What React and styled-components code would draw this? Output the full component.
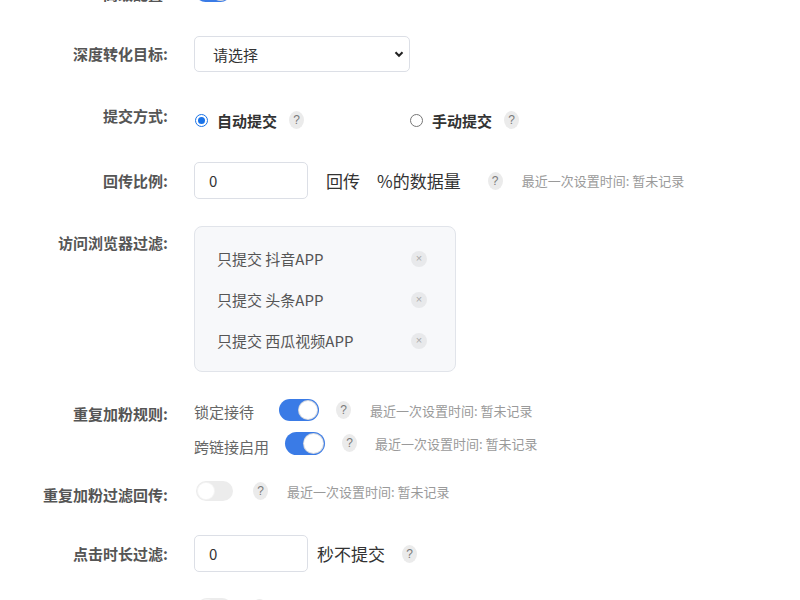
import React from 'react'
import styled, { createGlobalStyle } from 'styled-components'

const GlobalStyle = createGlobalStyle`
    html, body {
        margin: 0;
        padding: 0;
        background: #ffffff;
        overflow: hidden;
    }
    body {
        font-family: 'Noto Sans CJK SC', 'Noto Sans', sans-serif;
        color: #333;
    }
`

const Form = styled.div`
    display: flex;
    flex-direction: column;
    height: 600px;
    overflow: hidden;
`

const Row = styled.div`
    display: flex;
    align-items: ${(p) => (p.$top ? 'flex-start' : 'center')};
    margin-top: ${(p) => p.$mt}px;
    min-height: ${(p) => p.$h || 0}px;
    flex-shrink: 0;
`

const Label = styled.div`
    width: 168px;
    margin-right: 26px;
    flex-shrink: 0;
    text-align: right;
    font-size: 15px;
    font-weight: 700;
    color: #555;
    line-height: 24px;
    padding-top: ${(p) => p.$pt || 0}px;
    position: relative;
    top: ${(p) => p.$dy || 0}px;
`

const Select = styled.div`
    width: 216px;
    height: 36px;
    box-sizing: border-box;
    border: 1px solid #dcdfe6;
    border-radius: 5px;
    display: flex;
    align-items: center;
    justify-content: space-between;
    padding: 0 4px 0 18px;
    font-size: 15px;
    color: #333;
`

const Input = styled.div`
    width: 114px;
    height: 37px;
    box-sizing: border-box;
    border: 1px solid #dcdfe6;
    border-radius: 5px;
    display: flex;
    align-items: center;
    padding-left: 14px;
    font-size: 15px;
    color: #333;
`

const Suffix = styled.span`
    font-size: 17px;
    color: #333;
    margin-left: ${(p) => p.$ml || 0}px;
    white-space: nowrap;
`

const Help = styled.span`
    display: inline-flex;
    align-items: center;
    justify-content: center;
    width: 15px;
    height: 18px;
    border-radius: 50%;
    background: #ebebeb;
    color: #7a7a7a;
    font-size: 12px;
    font-family: 'Liberation Sans', sans-serif;
    margin-left: ${(p) => p.$ml || 0}px;
    flex-shrink: 0;
`

const Note = styled.span`
    font-size: 13px;
    color: #9a9a9a;
    margin-left: ${(p) => p.$ml || 0}px;
    white-space: nowrap;
`

const RadioGroup = styled.div`
    display: flex;
    align-items: center;
`

const RadioItem = styled.label`
    display: flex;
    align-items: center;
    width: ${(p) => p.$w || 'auto'};
`

const RadioDot = styled.span`
    width: 13px;
    height: 13px;
    border-radius: 50%;
    box-sizing: border-box;
    border: 1px solid ${(p) => (p.$on ? '#1a73e8' : '#767676')};
    margin-left: 1px;
    display: flex;
    align-items: center;
    justify-content: center;

    &::after {
        content: '';
        width: 7px;
        height: 7px;
        border-radius: 50%;
        background: ${(p) => (p.$on ? '#1a73e8' : 'transparent')};
    }
`

const RadioText = styled.span`
    font-size: 15px;
    font-weight: 700;
    color: #333;
    margin-left: 9px;
`

const FilterBox = styled.div`
    width: 262px;
    box-sizing: border-box;
    border: 1px solid #e1e4ea;
    border-radius: 8px;
    background: #f7f8fa;
    padding: 20px 28px 19px 22px;
    display: flex;
    flex-direction: column;
    gap: 18px;
`

const FilterItem = styled.div`
    display: flex;
    align-items: center;
    justify-content: space-between;
    font-size: 15px;
    color: #555;
    line-height: 23px;
`

const CloseBtn = styled.span`
    width: 16px;
    height: 16px;
    border-radius: 50%;
    background: #e8e9eb;
    color: #aaa;
    font-size: 11px;
    display: flex;
    align-items: center;
    justify-content: center;
    font-family: 'Liberation Sans', sans-serif;
`

const Stack = styled.div`
    display: flex;
    flex-direction: column;
    gap: ${(p) => p.$gap}px;
`

const SubRow = styled.div`
    display: flex;
    align-items: center;
    height: 22px;
`

const SubText = styled.span`
    font-size: 15px;
    color: #666;
    position: relative;
    top: ${(p) => p.$dy || 0}px;
`

const Switch = styled.span`
    display: inline-block;
    position: relative;
    width: ${(p) => p.$w || 40}px;
    height: ${(p) => p.$h || 22}px;
    border-radius: 12px;
    background: ${(p) => (p.$on ? '#3a7be6' : '#ececec')};
    margin-left: ${(p) => p.$ml || 0}px;
    flex-shrink: 0;

    &::after {
        content: '';
        position: absolute;
        top: 2px;
        ${(p) => (p.$on ? 'right: 2px;' : 'left: 2px;')}
        width: ${(p) => (p.$h || 22) - 4}px;
        height: ${(p) => (p.$h || 22) - 4}px;
        border-radius: 50%;
        background: #fff;
        box-shadow: 0 0 0 1px ${(p) => (p.$on ? '#d5d8de' : '#f4f4f4')};
    }
`

const Chevron = () => (
    <svg width="12" height="12" viewBox="0 0 12 12">
        <path d="M2.5 4.2 L6 7.8 L9.5 4.2" fill="none" stroke="#222" strokeWidth="2" />
    </svg>
)

const NOTE = '最近一次设置时间: 暂未记录'

const filters = ['只提交 抖音APP', '只提交 头条APP', '只提交 西瓜视频APP']

export default function App() {
    return (
        <>
            <GlobalStyle />
            <Form>
                <Row $mt={-21}>
                    <Label $dy={3}>高级配置:</Label>
                    <Switch $on $w={36} $h={21} $ml={1} />
                </Row>

                <Row $mt={33}>
                    <Label>深度转化目标:</Label>
                    <Select>
                        <span>请选择</span>
                        <Chevron />
                    </Select>
                </Row>

                <Row $mt={36} $h={24}>
                    <Label $dy={-4}>提交方式:</Label>
                    <RadioGroup>
                        <RadioItem $w="215px">
                            <RadioDot $on />
                            <RadioText>自动提交</RadioText>
                            <Help $ml={12}>?</Help>
                        </RadioItem>
                        <RadioItem>
                            <RadioDot />
                            <RadioText>手动提交</RadioText>
                            <Help $ml={12}>?</Help>
                        </RadioItem>
                    </RadioGroup>
                </Row>

                <Row $mt={30}>
                    <Label>回传比例:</Label>
                    <Input>0</Input>
                    <Suffix $ml={18}>回传</Suffix>
                    <Suffix $ml={17}>%的数据量</Suffix>
                    <Help $ml={27}>?</Help>
                    <Note $ml={19}>{NOTE}</Note>
                </Row>

                <Row $mt={27} $top>
                    <Label $pt={5}>访问浏览器过滤:</Label>
                    <FilterBox>
                        {filters.map((f) => (
                            <FilterItem key={f}>
                                <span>{f}</span>
                                <CloseBtn>×</CloseBtn>
                            </FilterItem>
                        ))}
                    </FilterBox>
                </Row>

                <Row $mt={27} $top>
                    <Label $pt={3}>重复加粉规则:</Label>
                    <Stack $gap={11}>
                        <SubRow>
                            <SubText $dy={1}>锁定接待</SubText>
                            <Switch $on $ml={25} />
                            <Help $ml={17}>?</Help>
                            <Note $ml={19}>{NOTE}</Note>
                        </SubRow>
                        <SubRow>
                            <SubText $dy={3}>跨链接启用</SubText>
                            <Switch $on $ml={16} $h={23} />
                            <Help $ml={17}>?</Help>
                            <Note $ml={18}>{NOTE}</Note>
                        </SubRow>
                    </Stack>
                </Row>

                <Row $mt={25}>
                    <Label $dy={4}>重复加粉过滤回传:</Label>
                    <Switch $w={37} $h={20} $ml={2} />
                    <Help $ml={20}>?</Help>
                    <Note $ml={19}>{NOTE}</Note>
                </Row>

                <Row $mt={32}>
                    <Label>点击时长过滤:</Label>
                    <Input>0</Input>
                    <Suffix $ml={9}>秒不提交</Suffix>
                    <Help $ml={17}>?</Help>
                </Row>

                <Row $mt={26}>
                    <Label />
                    <Switch $w={35} $h={20} $ml={3} />
                    <Help $ml={20} />
                </Row>
            </Form>
        </>
    )
}
